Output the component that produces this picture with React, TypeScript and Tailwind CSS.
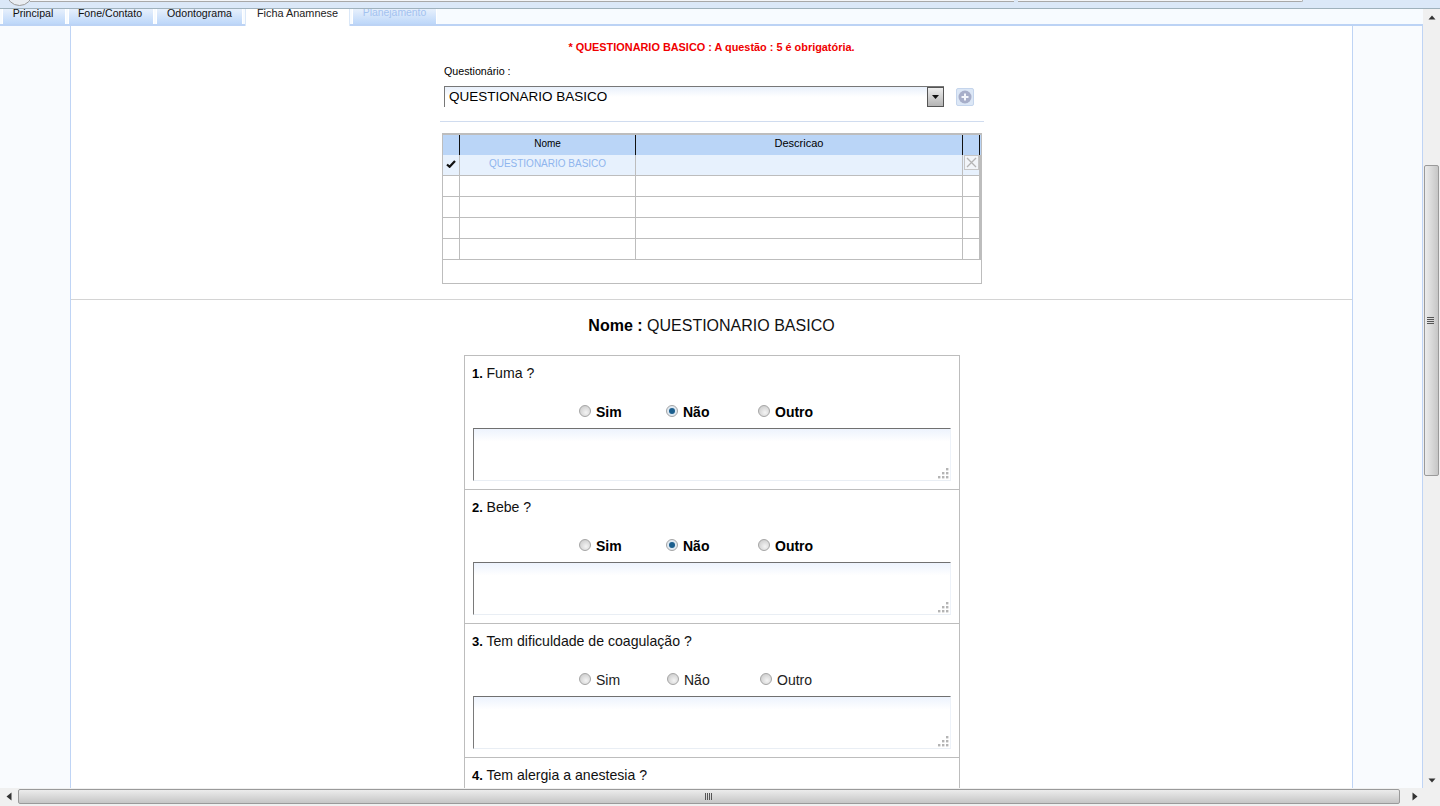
import React from "react"

const tabs = [
  { name: "Principal", w: "w-[64px] pr-[2px]" },
  { name: "Fone/Contato", w: "w-[86px] pr-[2px]" },
  { name: "Odontograma", w: "w-[87px]" },
  { name: "Ficha Anamnese", w: "w-[105px]", active: true },
  { name: "Planejamento", w: "w-[85px]", disabled: true },
]

const questions = [
  { n: 1, title: "Fuma ?", bold: true },
  { n: 2, title: "Bebe ?", bold: true },
  { n: 3, title: "Tem dificuldade de coagulação ?", bold: false },
]

function Radio({ checked }: { checked?: boolean }) {
  return (
    <span
      className={
        "flex h-[12px] w-[12px] shrink-0 items-center justify-center rounded-full border border-[#a5a5a5] " +
        (checked
          ? "bg-[#dfe9f2]"
          : "bg-[radial-gradient(circle_at_60%_65%,#f4f4f4_0%,#dcdcdc_50%,#c4c4c4_100%)]")
      }
    >
      {checked && <span className="h-[6px] w-[6px] rounded-full bg-[#1c5f8e]" />}
    </span>
  )
}

function RadioOption({ label, checked, bold, w }: { label: string; checked?: boolean; bold: boolean; w: string }) {
  return (
    <div className={"flex items-center gap-[5px] " + w}>
      <Radio checked={checked} />
      <span className={"mt-[2px] text-[14px] leading-none " + (bold ? "font-bold text-black" : "text-[#222]")}>{label}</span>
    </div>
  )
}

function Grip() {
  return (
    <svg width="12" height="12" viewBox="0 0 12 12" className="absolute bottom-[1px] right-[1px]">
      {[[9, 1], [5, 5], [9, 5], [1, 9], [5, 9], [9, 9]].map(([x, y], i) => (
        <rect key={i} x={x} y={y} width="2.4" height="2.4" fill="#b4b4b4" />
      ))}
    </svg>
  )
}

function QuestionTitle({ n, title }: { n: number; title: string }) {
  return (
    <div className="h-[17px] text-[13px] leading-[17px] text-[#111]">
      <b className="text-black">{n}.</b> <span className="text-[14.1px]">{title}</span>
    </div>
  )
}

function Question({ n, title, bold }: { n: number; title: string; bold: boolean }) {
  return (
    <div className="h-[134px] border-b border-[#bdbdbd] pl-[8px] pt-[9px]">
      <div className="-ml-px">
        <QuestionTitle n={n} title={title} />
      </div>
      <div className="mt-[21px] flex h-[16px] pl-[106px]">
        <RadioOption label="Sim" bold={bold} w={bold ? "w-[87px]" : "w-[88px]"} />
        <RadioOption label="Não" checked={bold} bold={bold} w={bold ? "w-[92px]" : "w-[93px]"} />
        <RadioOption label="Outro" bold={bold} w="w-[70px]" />
      </div>
      <div className="relative mt-[9px] h-[53px] w-[478px] border-l border-t border-r border-b border-l-[#7a7a7a] border-t-[#707070] border-r-[#edf2f9] border-b-[#e9eef4] bg-gradient-to-b from-[#edf3fd] to-white to-[25%]">
        <Grip />
      </div>
    </div>
  )
}

function GridRow({ selected }: { selected?: boolean }) {
  return (
    <div className={"flex h-[21px] border-b border-[#bdbdbd] " + (selected ? "bg-[#e7f1fd]" : "")}>
      <div className="flex w-[17px] items-center justify-center border-r border-[#bdbdbd]">
        {selected && (
          <svg width="10" height="8" viewBox="0 0 10 8" className="mb-[3px]">
            <path d="M1 4.5 L3.6 6.8 L9 1" fill="none" stroke="#111" strokeWidth="2.2" />
          </svg>
        )}
      </div>
      <div className="flex w-[176px] items-center justify-center border-r border-[#bdbdbd] pb-[3px] text-[10px] text-[#8fb5ee]">
        {selected ? "QUESTIONARIO BASICO" : ""}
      </div>
      <div className="w-[327px] border-r border-[#bdbdbd]" />
      <div className="relative w-[18px] border-r-[2px] border-[#bdbdbd]">
        {selected && (
          <span className="absolute left-[1px] top-0 flex h-[15px] w-[15px] items-center justify-center border border-[#c6c6c6] bg-[#f2f5f9]">
            <svg width="11" height="11" viewBox="0 0 11 11">
              <path d="M1 1 L10 10 M10 1 L1 10" stroke="#b4b4b4" strokeWidth="1.3" />
            </svg>
          </span>
        )}
      </div>
    </div>
  )
}

export default function App() {
  return (
    <div className="relative flex h-[806px] w-[1440px] flex-col overflow-hidden bg-white font-['Liberation_Sans',Arial,sans-serif]">
      {/* top of the window, mostly cut off */}
      <div className="relative h-[9px] shrink-0 border-b border-[#9fb1bc] bg-[#dbe8f8]">
        <div className="absolute left-[30px] top-0 h-[2px] w-[984px] border-b border-[#a8a8a8] bg-[#f3f5f8]" />
        <div className="absolute left-[1018px] top-0 h-[2px] w-[285px] rounded-br-sm border-b border-r border-[#a8a8a8] bg-[#f3f5f8]" />
        <div className="absolute left-[6px] top-[-21px] h-[27px] w-[27px] rounded-full border border-[#9a9a9a] bg-[#e9edf2]" />
      </div>

      <div className="flex min-h-0 flex-1">
        <div className="flex min-w-0 flex-1 flex-col">
          {/* tabs */}
          <div className="flex h-[15px] shrink-0 gap-[2px] bg-[#f7fbff] pl-[2px]">
            {tabs.map((t) => (
              <div
                key={t.name}
                className={
                  "flex items-center justify-center pb-[6px] leading-none " +
                  t.w +
                  " " +
                  (t.active
                    ? "relative z-10 h-[17px] border-x border-[#dbe8f8] bg-white pb-[8px] text-[10.9px] text-[#222]"
                    : t.disabled
                      ? "border-x border-white bg-gradient-to-b from-[#e7f0fc] to-[#bdd7f9] text-[10.4px] text-[#a3c2f0]"
                      : "border-x border-white bg-gradient-to-b from-[#e7f0fc] to-[#bdd7f9] text-[10.6px] text-[#111]")
                }
              >
                {t.name}
              </div>
            ))}
          </div>

          {/* page */}
          <div className="flex min-h-0 flex-1 border-t-2 border-[#bcd3f5]">
            <div className="w-[70px] shrink-0 bg-[#f9fbfe]" />
            <div className="w-[1283px] shrink-0 overflow-hidden border-x border-[#bfd4f5] bg-white">
              <div className="h-[274px] border-b border-[#d4d4d4]">
                <div className="pt-[15px] text-center text-[10.9px] font-bold leading-[13px] text-[#f00000]">
                  * QUESTIONARIO BASICO : A questão : 5 é obrigatória.
                </div>
                <div className="ml-[373px] mt-[11px] text-[10.7px] leading-[12px] text-black">Questionário :</div>
                <div className="ml-[373px] mt-[9px] flex items-start">
                  <div className="flex h-[21px] w-[500px] items-center justify-between border-l border-t border-[#777] bg-gradient-to-b from-[#e9f0fb] to-white to-[50%] pl-[4px]">
                    <span className="text-[13.5px] leading-none text-black">QUESTIONARIO BASICO</span>
                    <span className="flex h-[20px] w-[17px] items-center justify-center border border-[#555] bg-gradient-to-b from-[#eeeeee] to-[#b4b4b4]">
                      <svg width="9" height="7" viewBox="0 0 9 7">
                        <path d="M1 1 H8 L4.5 5 Z" fill="#111" />
                      </svg>
                    </span>
                  </div>
                  <div className="ml-[12px] mt-[2px] flex h-[18px] w-[18px] items-center justify-center rounded-[2px] border border-[#c5d5ec] bg-[#dce7f6]">
                    <svg width="14" height="14" viewBox="0 0 14 14">
                      <circle cx="7" cy="7" r="6.5" fill="#a7aec9" />
                      <path d="M7 3.5 V10.5 M3.5 7 H10.5" stroke="#f4f6fb" strokeWidth="2" />
                    </svg>
                  </div>
                </div>
                <div className="ml-[369px] mt-[14px] h-px w-[544px] bg-[#d0dcef]" />

                {/* grid */}
                <div className="ml-[371px] mt-[11px] h-[151px] w-[540px] border border-t-2 border-[#bdbdbd]">
                  <div className="flex h-[20px] bg-[#bad5f7] pb-[3px] text-[10px] text-black">
                    <div className="-mb-[3px] w-[17px] border-r border-[#111]" />
                    <div className="-mb-[3px] flex w-[176px] items-center justify-center border-r border-[#111] pb-[3px]">Nome</div>
                    <div className="-mb-[3px] flex w-[327px] items-center justify-center border-r border-[#111] pb-[3px] text-[11px]">Descricao</div>
                    <div className="-mb-[3px] w-[17px] border-r border-[#111]" />
                  </div>
                  <GridRow selected />
                  <GridRow />
                  <GridRow />
                  <GridRow />
                  <GridRow />
                </div>
              </div>

              <div className="pt-[17px] text-center text-[16px] leading-[18px] text-[#111]">
                <b className="text-black">Nome :</b> QUESTIONARIO BASICO
              </div>
              <div className="ml-[393px] mt-[20px] w-[496px] border-x border-t border-[#bdbdbd]">
                {questions.map((q) => (
                  <Question key={q.n} {...q} />
                ))}
                <div className="h-[60px] pl-[7px] pt-[9px]">
                  <QuestionTitle n={4} title="Tem alergia a anestesia ?" />
                </div>
              </div>
            </div>
            <div className="min-w-0 flex-1 border-r border-[#bfd4f5] bg-[#f9fbfe]" />
          </div>
        </div>

        {/* vertical scrollbar */}
        <div className="flex w-[17px] shrink-0 flex-col items-center bg-[#f0f0f0]">
          <div className="flex h-[11px] w-full items-end justify-center">
            <svg width="8" height="5" viewBox="0 0 8 5">
              <path d="M0.5 4.5 L4 0.5 L7.5 4.5 Z" fill="#333" />
            </svg>
          </div>
          <div className="mt-[145px] flex h-[311px] w-[15px] items-center justify-center rounded-[2px] border border-[#9a9a9a] bg-gradient-to-r from-[#ececec] to-[#c6c6c6]">
            <div className="mr-[2px] flex flex-col gap-px">
              {[0, 1, 2, 3].map((i) => (
                <div key={i} className="h-px w-[7px] bg-[#555]" />
              ))}
            </div>
          </div>
          <div className="mt-auto flex h-[14px] w-full items-start justify-center pt-[4px]">
            <svg width="8" height="5" viewBox="0 0 8 5">
              <path d="M0.5 0.5 L4 4.5 L7.5 0.5 Z" fill="#333" />
            </svg>
          </div>
        </div>
      </div>

      {/* horizontal scrollbar */}
      <div className="flex h-[18px] shrink-0 items-start bg-[#f0f0f0] pt-px">
        <div className="flex h-[15px] w-[18px] items-center justify-center">
          <svg width="6" height="9" viewBox="0 0 6 9">
            <path d="M5.5 0.5 L0.5 4.5 L5.5 8.5 Z" fill="#333" />
          </svg>
        </div>
        <div className="flex h-[15px] w-[1382px] items-center justify-center rounded-[2px] border border-[#9a9a9a] bg-gradient-to-b from-[#ececec] to-[#c6c6c6]">
          <div className="mr-[2px] flex gap-px">
            {[0, 1, 2, 3].map((i) => (
              <div key={i} className="h-[7px] w-px bg-[#555]" />
            ))}
          </div>
        </div>
        <div className="ml-auto mr-[20px] flex h-[15px] w-[10px] items-center justify-center">
          <svg width="6" height="9" viewBox="0 0 6 9">
            <path d="M0.5 0.5 L5.5 4.5 L0.5 8.5 Z" fill="#333" />
          </svg>
        </div>
      </div>
    </div>
  )
}
